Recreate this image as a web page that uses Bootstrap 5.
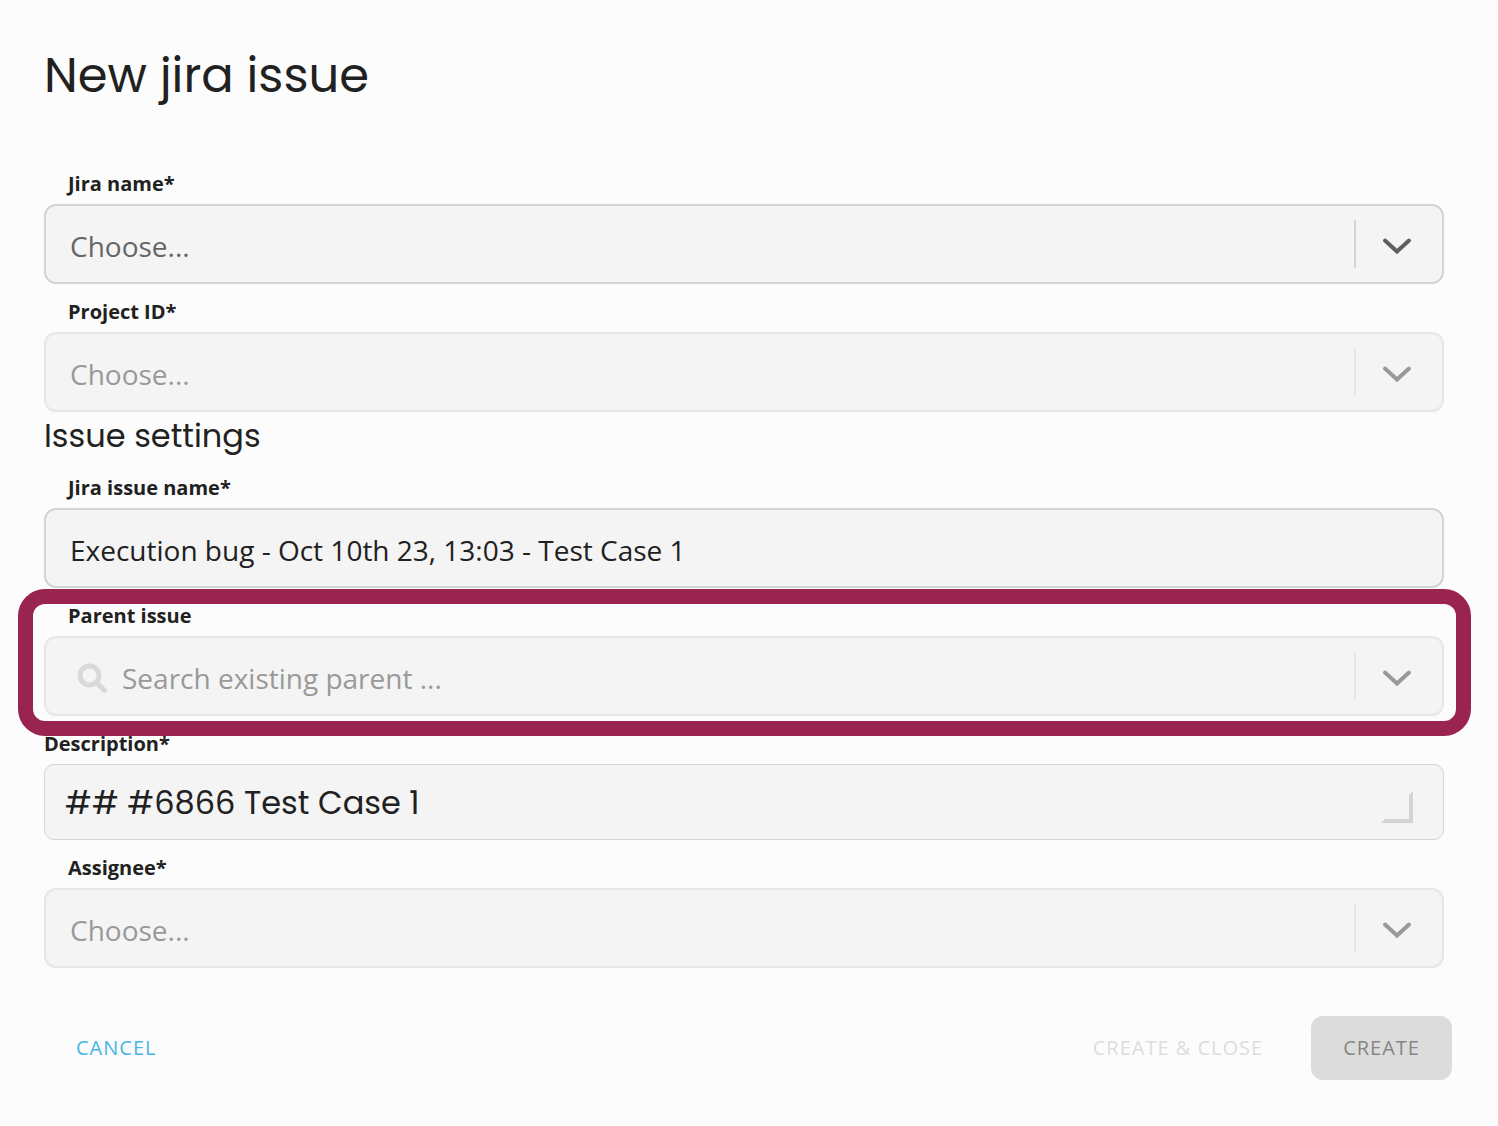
<!DOCTYPE html>
<html lang="en">
<head>
<meta charset="utf-8">
<meta name="viewport" content="width=device-width, initial-scale=1">
<title>New jira issue</title>
<link href="https://cdn.jsdelivr.net/npm/bootstrap@5.3.0/dist/css/bootstrap.min.css" rel="stylesheet">
<style>
  body { background: #fcfcfc; color: #212121; font-family: "Open Sans", sans-serif; }
  .issue-form { padding: 40px 54px 46px 44px; }
  .display-font { font-family: Poppins, Inter, sans-serif; font-weight: 400; }
  .page-title { font-size: 48px; line-height: 72px; margin-bottom: 44px; }
  .section-title { font-size: 32px; line-height: 48px; }
  .field-label { font-size: 20px; font-weight: 700; line-height: 40px; padding: 8px 24px 0; }
  .field-label.flush { padding-left: 0; }
  .field-box, .field-box:focus, .field-box:disabled {
    appearance: none; background: #f4f4f4; color: #212121; height: 80px;
    border: 2px solid #d4d4d4; border-radius: 12px;
    padding: 4px 96px 0 24px; font-size: 28px; line-height: 40px; opacity: 1;
  }
  select.field-box { color: #666; }
  .field-box:disabled, select.field-box:disabled { border-color: #e6e6e6; color: #999; }
  .field-box::placeholder { color: #999; opacity: 1; }
  .field-box.with-icon { padding-left: 76px; }
  textarea.note-box.field-box {
    height: 76px; border-width: 1px; border-radius: 10px; padding: 14px 96px 12px 20px;
    font-size: 32px; line-height: 48px; resize: none; overflow: hidden;
  }
  .toggle { height: 48px; width: 88px; margin: 16px 2px; padding: 4px 4px 0 0; border-left: 2px solid #d4d4d4; color: #5f5f5f; }
  .is-off .toggle { border-color: #e6e6e6; color: #999; }
  .search-icon { left: 33px; top: 27px; color: #d9d9d9; }
  .grip { right: 31px; bottom: 17px; }
  .over { pointer-events: none; }
  .highlight { inset: 1px -27px -20px -26px; border: 15px solid #99244f; border-radius: 27px; z-index: 2; }
  .actions { margin: 48px -8px 0 0; }
  .action { font-size: 20px; line-height: 32px; padding: 16px 32px; border: 0; border-radius: 12px; letter-spacing: 1px; }
  .action:disabled { opacity: 1; border: 0; }
  .action-link { color: #48b5e4; }
  .action-ghost:disabled { color: #dcdcdc; }
  .action-main:disabled { background: #dcdcdc; color: #868686; }
</style>
</head>
<body>
<svg class="d-none" aria-hidden="true">
  <symbol id="chevron" viewBox="0 0 30 18"><path d="M3 3.500 15 14.500 27 3.500" fill="none" stroke="currentColor" stroke-width="4" stroke-linecap="round" stroke-linejoin="miter"/></symbol>
</svg>
<form class="issue-form">
  <h1 class="page-title display-font">New jira issue</h1>

  <div>
    <label class="field-label d-block" for="jira">Jira name*</label>
    <div class="position-relative">
      <select class="field-box d-block w-100" id="jira"><option>Choose...</option></select>
      <span class="toggle over position-absolute top-0 end-0 d-flex align-items-center justify-content-center"><svg width="30" height="18"><use href="#chevron"/></svg></span>
    </div>
  </div>

  <div class="is-off">
    <label class="field-label d-block" for="project">Project ID*</label>
    <div class="position-relative">
      <select class="field-box d-block w-100" id="project" disabled><option>Choose...</option></select>
      <span class="toggle over position-absolute top-0 end-0 d-flex align-items-center justify-content-center"><svg width="30" height="18"><use href="#chevron"/></svg></span>
    </div>
  </div>

  <h2 class="section-title display-font mb-0">Issue settings</h2>

  <div>
    <label class="field-label d-block" for="issue">Jira issue name*</label>
    <input class="field-box d-block w-100" id="issue" type="text" value="Execution bug - Oct 10th 23, 13:03 - Test Case 1">
  </div>

  <div class="is-off position-relative">
    <label class="field-label d-block" for="parent">Parent issue</label>
    <div class="position-relative">
      <input class="field-box with-icon d-block w-100" id="parent" type="text" placeholder="Search existing parent ..." disabled>
      <svg class="search-icon over position-absolute" width="30" height="30" viewBox="0 0 30 30" fill="none" stroke="currentColor"><circle cx="12.500" cy="12.500" r="9.500" stroke-width="5"/><path d="M20 20 27.500 27.500" stroke-width="5" stroke-linecap="round"/></svg>
      <span class="toggle over position-absolute top-0 end-0 d-flex align-items-center justify-content-center"><svg width="30" height="18"><use href="#chevron"/></svg></span>
    </div>
    <div class="highlight over position-absolute"></div>
  </div>

  <div>
    <label class="field-label flush d-block" for="description">Description*</label>
    <div class="position-relative">
      <textarea class="field-box note-box display-font d-block w-100" id="description" rows="1">## #6866 Test Case 1</textarea>
      <svg class="grip over position-absolute" width="32" height="32" viewBox="0 0 32 32"><path d="M0 32 4 28H28V4L32 0V32Z" fill="#d4d4d4"/></svg>
    </div>
  </div>

  <div class="is-off">
    <label class="field-label d-block" for="assignee">Assignee*</label>
    <div class="position-relative">
      <select class="field-box d-block w-100" id="assignee" disabled><option>Choose...</option></select>
      <span class="toggle over position-absolute top-0 end-0 d-flex align-items-center justify-content-center"><svg width="30" height="18"><use href="#chevron"/></svg></span>
    </div>
  </div>

  <div class="actions d-flex flex-wrap align-items-center">
    <button class="btn action action-link me-auto" type="button">CANCEL</button>
    <button class="btn action action-ghost me-3" type="button" disabled>CREATE &amp; CLOSE</button>
    <button class="btn action action-main" type="submit" disabled>CREATE</button>
  </div>
</form>
<script src="https://cdn.jsdelivr.net/npm/bootstrap@5.3.0/dist/js/bootstrap.bundle.min.js"></script>
</body>
</html>
